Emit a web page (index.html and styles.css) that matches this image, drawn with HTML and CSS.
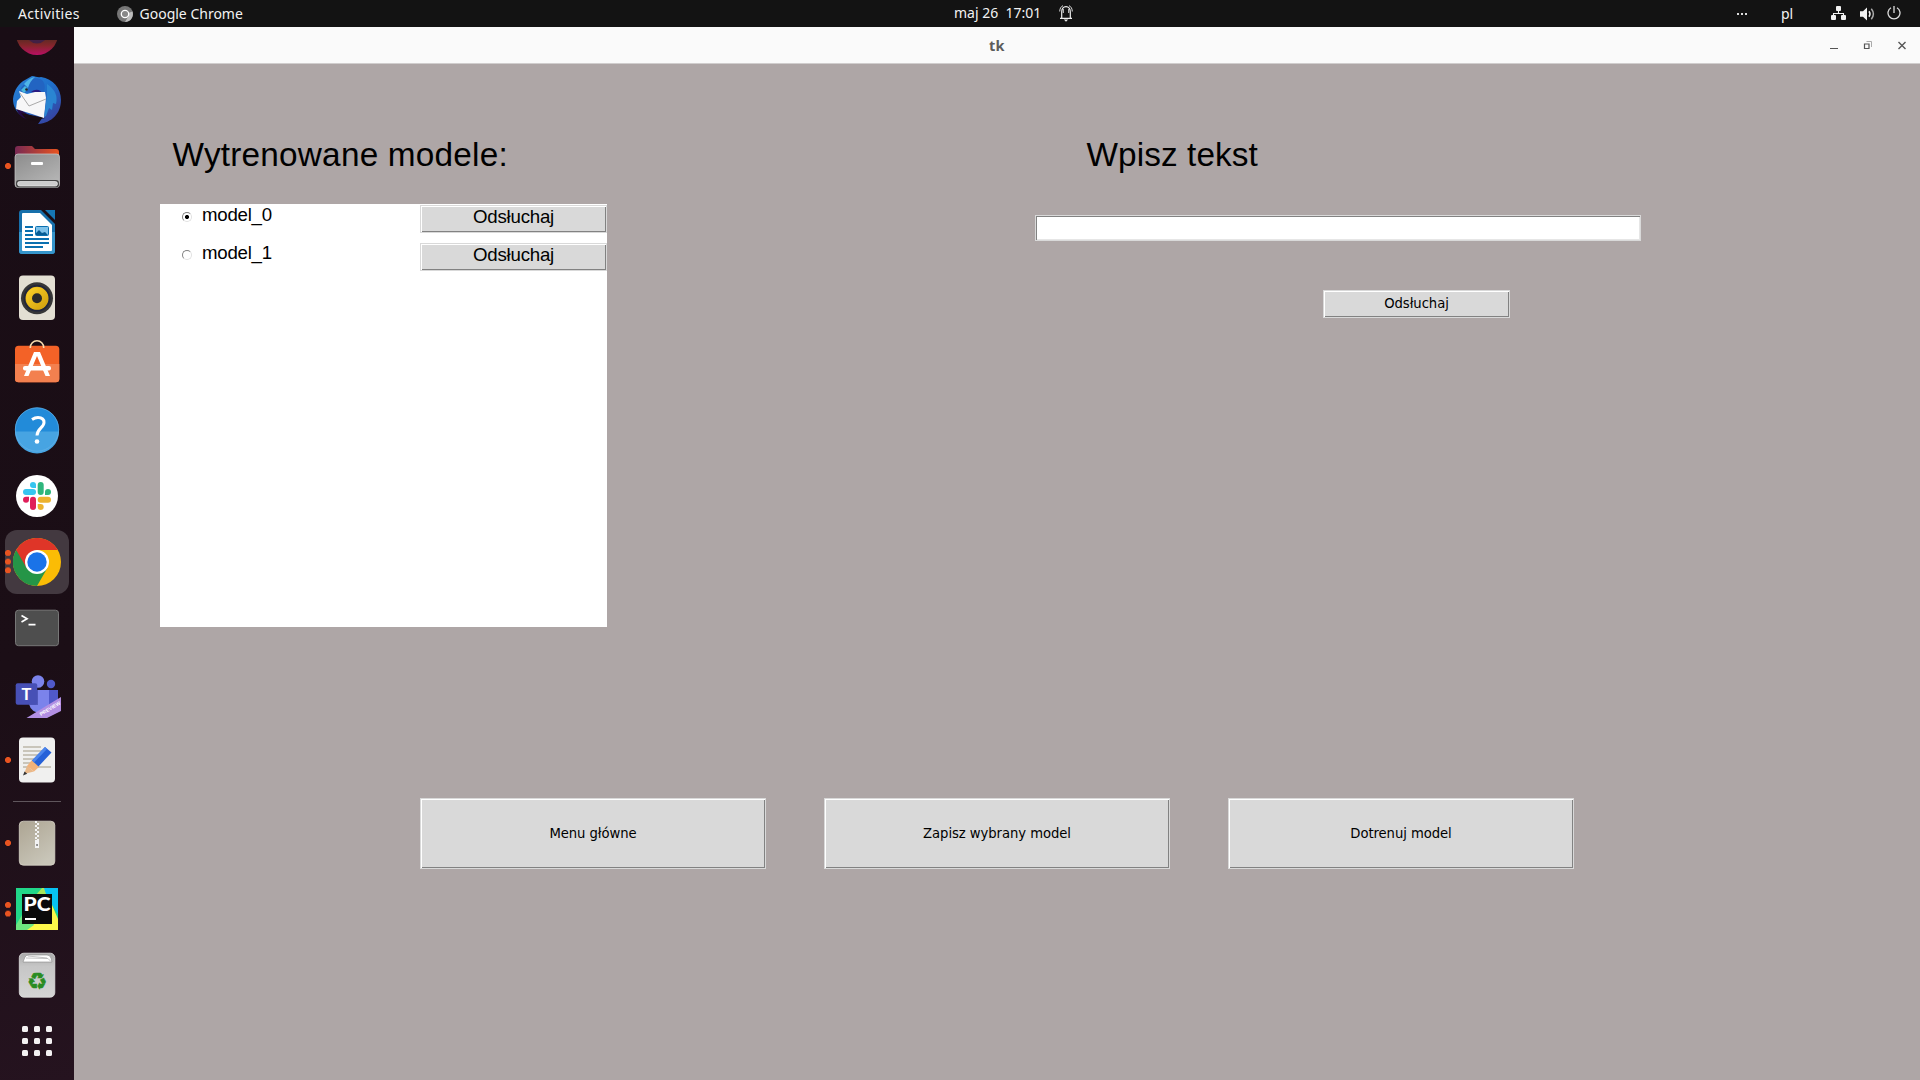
FILE: index.html
```html
<!DOCTYPE html>
<html lang="pl">
<head>
<meta charset="utf-8">
<title>tk</title>
<link rel="stylesheet" href="styles.css">
</head>
<body>
<header class="topbar">
  <span class="activities">Activities</span>
  <svg class="app-icon" width="16" height="16" viewBox="0 0 16 16"><circle cx="8" cy="8" r="8" fill="#777"/><path d="M8 8l7.5-2.5A8 8 0 0 1 8 16l3.5-6z" fill="#bdbdbd"/><circle cx="8" cy="8" r="3.7" fill="#888" stroke="#fff" stroke-width="1.3"/></svg>
  <span class="app-name">Google Chrome</span>
  <span class="clock">maj 26&nbsp; 17:01</span>
  <svg class="bell" width="14" height="17" viewBox="0 0 14 17" fill="none" stroke="#eee" stroke-width="1.2"><path d="M1 13.4h12M2.7 13V7c0-3.5 1.7-5.3 4.3-5.3S11.300 3.500 11.300 7v6"/><path d="M4.300 4v4M9.700 4v4M.7 6.500C.8 3.500 2 1.500 4 .7M13.300 6.500C13.200 3.500 12 1.500 10 .7" stroke-width=".9"/><path d="M4.800 14.500h4.400L7 16.700z" fill="#eee" stroke="none"/></svg>
  <svg class="dots" width="10" height="2" viewBox="0 0 10 2" fill="#ddd"><path d="M0 0h2v2H0zM4 0h2v2H4zM8 0h2v2H8z"/></svg>
  <span class="lang">pl</span>
  <svg class="network" width="16" height="14" viewBox="0 0 16 14" fill="#f2f2f2"><rect x="5" y="0" width="5" height="5" rx="1"/><rect x="0" y="9" width="5" height="5" rx="1"/><rect x="10" y="9" width="5" height="5" rx="1"/><path d="M2.500 10V7.500h10V10M7.500 4v3.500" fill="none" stroke="#f2f2f2" stroke-width="1.100"/></svg>
  <svg class="volume" width="15" height="14" viewBox="0 0 15 14"><path d="M0 4.300h3L7 .5v13L3 9.700H0z" fill="#f2f2f2"/><path d="M9 4.300q2 2.700 0 5.400" fill="none" stroke="#f2f2f2" stroke-width="1.500"/><path d="M11.300 1.800q4.200 5.200 0 10.400" fill="none" stroke="#aaa" stroke-width="1.500"/></svg>
  <svg class="power" width="14" height="14" viewBox="0 0 14 14" fill="none" stroke="#ddd" stroke-width="1.300"><path d="M4 1.700a6 6 0 1 0 6 0M7 0v7"/></svg>
</header>
<div class="desktop">
  <nav class="dock">
    <div class="slot slot-first"><svg width="48" height="48" viewBox="0 0 48 48"><defs><linearGradient id="ff" x2="0" y2="1"><stop offset=".6" stop-color="#5a2a22"/><stop offset=".78" stop-color="#86252c"/><stop offset="1" stop-color="#b80f64"/></linearGradient><clipPath id="fc"><path d="M0 30h48v18H0z"/></clipPath></defs><g clip-path="url(#fc)"><circle cx="24" cy="24" r="21" fill="url(#ff)"/><circle cx="24" cy="23" r="10.500" fill="#422044"/></g></svg></div>
    <div class="slot"><svg width="48" height="48" viewBox="0 0 48 48"><defs><linearGradient id="tb" x2=".8" y2="1"><stop stop-color="#2c83d8"/><stop offset=".5" stop-color="#1f6fca"/><stop offset="1" stop-color="#383f9e"/></linearGradient></defs><path d="M19 0c4 0 5 2 9 1 12 2 20 11 20 23 0 13-9 23-23 24l5-7L12 42C3 37 0 30 0 23 1 14 6 7 12 4z" fill="url(#tb)"/><path d="M12 8c5-6 11-7 17-4 4 4 3 10 1 14L13 16l-3 3c-4-3-3-8 2-11z" fill="#2264c2"/><path d="M11 8Q16 2 22 1q-5 4-7 11z" fill="#4fb5e8"/><path d="M18 16c5-4 10-2 12 2z" fill="#291a82"/><path d="M3 31l13 8 10 3-11 1C9 43 4 37 3 31z" fill="#250b46"/><path d="M8 37l24 5-4 1-3 4-1-2q-9-1-12-3z" fill="#190d15"/><path d="M6 15l8 3 8-2h10l1 6-2 20-12-4-16-5 1-8 4-4z" fill="#f7f7f8"/><path d="M7 17l9 13 17-7" fill="none" stroke="#aaa" stroke-width="1"/><path d="M34 8q12 8 9 20l-3-1-1 7-3-2-3 8-2 1 3-22z" fill="#2a85d2"/><path d="M8 14l4-4 3 3-4 4z" fill="#48b8de"/><circle cx="13.500" cy="13.500" r="1.300" fill="#222"/></svg></div>
    <div class="slot"><i class="run run-1"></i><svg width="48" height="48" viewBox="0 0 48 48"><defs><linearGradient id="fo"><stop stop-color="#772953"/><stop offset="1" stop-color="#e95420"/></linearGradient><linearGradient id="fg" x2=".7" y2="1"><stop stop-color="#8c8c8c"/><stop offset="1" stop-color="#b5b5b5"/></linearGradient></defs><path d="M2 25V7q0-3 3-3h14l3 3h21q3 0 3 3v15z" fill="url(#fo)"/><rect x="2" y="12" width="44.500" height="33.500" rx="3" fill="url(#fg)" stroke="#ccc" stroke-width=".7"/><rect x="3" y="38" width="43" height="7.500" rx="3" fill="#444"/><rect x="4.500" y="39.500" width="40" height="4.500" rx="2.200" fill="#ccc" stroke="#eee" stroke-width=".7"/><rect x="18" y="20" width="12" height="3" rx="1" fill="#fff"/></svg></div>
    <div class="slot"><svg width="48" height="48" viewBox="0 0 48 48"><path d="M6 5q0-3 3-3h19l14 14v27q0 3-3 3H9q-3 0-3-3z" fill="#1770ab"/><path d="M6 24h36v19q0 3-3 3H9q-3 0-3-3z" fill="#3595cb"/><path d="M9 6q0-1 1-1h17l12 12v25q0 1-1 1H10q-1 0-1-1z" fill="#fff"/><path d="M32 2h10v10z" fill="#1677b4"/><path d="M12 19h8M12 23h8M12 27h8M12 31h24M12 35h24M12 39h18" stroke="#0a70b0" stroke-width="2"/><rect x="22.500" y="18.500" width="13" height="9" rx="1" fill="#7fc2ea" stroke="#0a70b0"/><path d="M23 27v-2l3-3 3 3 3-1 3 3z" fill="#075c94"/></svg></div>
    <div class="slot"><svg width="48" height="48" viewBox="0 0 48 48"><defs><linearGradient id="sp" x2="1" y2="1"><stop stop-color="#ffd32a"/><stop offset="1" stop-color="#cd9d0c"/></linearGradient></defs><rect x="6" y="1.500" width="36" height="44.500" rx="4" fill="#e3dfd3"/><circle cx="24" cy="24.300" r="16" fill="#373737"/><circle cx="24" cy="24.300" r="12.500" fill="#dcae13" stroke="#22263a" stroke-width="2"/><circle cx="24" cy="24.300" r="11" fill="url(#sp)"/><circle cx="24" cy="24.300" r="5" fill="#2b2b2b"/></svg></div>
    <div class="slot"><svg width="48" height="48" viewBox="0 0 48 48"><rect x="2" y="5.700" width="44.300" height="36.600" rx="3.500" fill="#f36227"/><path d="M2 24h44.300v15q0 3.300-3.500 3.300H5.500Q2 42.300 2 39z" fill="#f3804f"/><path d="M17.300 8V7.500a6.700 6.700 0 0 1 13.400 0V8" fill="none" stroke="#f8dcae" stroke-width="1.600"/><path d="M21 12h6l10 24h-4.500L24 16l-8.500 20H11z" fill="#fff"/><rect x="10" y="26" width="28" height="4.500" rx="2" fill="#fff"/></svg></div>
    <div class="slot"><svg width="48" height="48" viewBox="0 0 48 48"><g transform="translate(0 -.5)"><circle cx="24" cy="24" r="22" fill="#228bd9"/><path d="M2 26h44a22 22 0 0 1-44 0z" fill="#47a4e2"/><circle cx="24" cy="24" r="21.700" fill="none" stroke="#64b2e6" stroke-width=".7"/><path d="M19 14q3-2 6-2c4 0 6 2 6 5 0 5-7 6-7 13" fill="none" stroke="#fff" stroke-width="3"/><circle cx="24" cy="36" r="2.300" fill="#fff"/></g></svg></div>
    <div class="slot"><svg width="48" height="48" viewBox="0 0 48 48"><circle cx="24" cy="24" r="21" fill="#fff"/><rect x="10" y="17" width="13" height="6" rx="3" fill="#36c5f0"/><path d="M23 16h-3a3 3 0 1 1 3-3z" fill="#36c5f0"/><rect x="24.700" y="10" width="6" height="13" rx="3" fill="#2eb67d"/><path d="M32 23v-3a3 3 0 1 1 3 3z" fill="#2eb67d"/><rect x="24.700" y="24.700" width="13.300" height="6" rx="3" fill="#ecb22e"/><path d="M24.700 32h3a3 3 0 1 1-3 3z" fill="#ecb22e"/><rect x="17" y="24.700" width="6" height="13.300" rx="3" fill="#e01e5a"/><path d="M16 24.700v3a3 3 0 1 1-3-3z" fill="#e01e5a"/></svg></div>
    <div class="slot slot-active"><i class="run run-3"></i><svg width="48" height="48" viewBox="0 0 48 48"><circle cx="24" cy="24" r="24" fill="#fbbc05"/><path d="M24 24L3.200 12A24 24 0 0 0 24 48l10.400-18z" fill="#259547"/><path d="M24 12h20.800A24 24 0 0 0 3.200 12l10.400 18z" fill="#df3528"/><circle cx="24" cy="24" r="12" fill="#fff"/><circle cx="24" cy="24" r="9.700" fill="#1a73e8"/></svg></div>
    <div class="slot"><svg width="48" height="48" viewBox="0 0 48 48"><rect x="2.500" y="6.200" width="43" height="35.500" rx="3" fill="#4e4e4e" stroke="#777"/><path d="M8.500 11.500l5.500 3.200-5.500 3.200M15.500 20.700h7" fill="none" stroke="#fff" stroke-width="1.700"/></svg></div>
    <div class="slot"><svg width="48" height="48" viewBox="0 0 48 48"><circle cx="38" cy="14" r="4.200" fill="#5059c9"/><path d="M35 20h10v14q0 5-5 5h-5z" fill="#5059c9"/><circle cx="25" cy="11.500" r="6.300" fill="#7b83eb"/><path d="M16 20h20v18q0 4-7 5-11 0-13-9z" fill="#7b83eb"/><path d="M16 20h9v15h-9z" fill="#545cbc"/><rect x="2.700" y="13.300" width="21.500" height="21.500" rx="2" fill="#4750b6"/><text x="13.300" y="29.800" text-anchor="middle" font-family="Liberation Sans, sans-serif" font-weight="700" font-size="16" fill="#fff">T</text><path d="M13.500 48L48 27v14l-14 7z" fill="#b28fe3"/><text transform="translate(28 46) rotate(-31)" font-family="Liberation Sans, sans-serif" font-weight="700" font-size="5" fill="#fff">PREVIEW</text></svg></div>
    <div class="slot"><i class="run run-1"></i><svg width="48" height="48" viewBox="0 0 48 48"><rect x="6" y="1.500" width="36" height="45" rx="4" fill="#f0f0ef"/><path d="M10 11h18M10 15h22M10 19h20M10 23h18M10 27h16M10 31h28" stroke="#c9c5ba" stroke-width="1.800"/><path d="M11 38l3-8 7 5.500z" fill="#e9b889"/><path d="M14 30l5-6 7.500 6.500-5.500 5z" fill="#f2b27a"/><path d="M19 24.500L32 11l6.500 5.500-13 14z" fill="#2661d8"/><path d="M19 24.500L32 11l2 2-13 13.500z" fill="#4b85ec"/><path d="M10 39.500l1.500-4 2.700 2.200z" fill="#333"/></svg></div>
    <hr class="separator">
    <div class="slot"><i class="run run-1"></i><svg width="48" height="48" viewBox="0 0 48 48"><defs><linearGradient id="zp" x2=".6" y2="1"><stop stop-color="#ada593"/><stop offset="1" stop-color="#c8c5b8"/></linearGradient></defs><rect x="6.300" y="2.200" width="35.500" height="44" rx="4" fill="url(#zp)" stroke="#d8d4c8" stroke-width=".8"/><path d="M23 2v20" stroke="#f3f3f3" stroke-width="2" stroke-dasharray="2 2"/><path d="M25 4v18" stroke="#f3f3f3" stroke-width="2" stroke-dasharray="2 2"/><rect x="22" y="21" width="4" height="8" fill="#f3f3f3"/><rect x="23.300" y="25" width="1.500" height="2" fill="#777"/></svg></div>
    <div class="slot"><i class="run run-2"></i><svg width="48" height="48" viewBox="0 0 48 48"><path d="M3 3h42v42H3z" fill="#21d789"/><path d="M30 3h15v26L34 12z" fill="#07c3f2"/><path d="M39 20l6 14v11H13l8-6h18z" fill="#fcf84a"/><path d="M22 11l7-8h2l3 9H22z" fill="#a7e75c"/><path d="M3 40l6-10 12 10-7 5H3z" fill="#6de780"/><rect x="9" y="9" width="30" height="30" fill="#0b0b0b"/><rect x="12" y="33" width="11" height="2" fill="#fff"/><text x="10.500" y="26.300" textLength="27" lengthAdjust="spacingAndGlyphs" font-family="Lato, sans-serif" font-weight="900" font-size="19" fill="#fff">PC</text></svg></div>
    <div class="slot"><svg width="48" height="48" viewBox="0 0 48 48"><defs><linearGradient id="tr" x2="0" y2="1"><stop stop-color="#aaa"/><stop offset=".3" stop-color="#c6c6c6"/><stop offset="1" stop-color="#d5d5d5"/></linearGradient></defs><rect x="6.300" y="2.200" width="35.500" height="44" rx="4.500" fill="url(#tr)" stroke="#e0e0e0" stroke-width=".8"/><path d="M10 11l2-5q1-2 4-2h18q3 0 4 3l1 4z" fill="#fff" stroke="#888" stroke-width=".6"/><path d="M13 7l22 .500 3 3M15 5l19 2" fill="none" stroke="#aaa" stroke-width=".7"/><text x="24" y="38" text-anchor="middle" font-family="DejaVu Sans, sans-serif" font-size="23" fill="#298c22" stroke="#298c22" stroke-width=".5">♻</text></svg></div>
    <div class="slot"><svg width="48" height="48" viewBox="0 0 48 48"><g fill="#f3f1f2"><rect x="9" y="9" width="6" height="6" rx="1.500"/><rect x="21" y="9" width="6" height="6" rx="1.500"/><rect x="33" y="9" width="6" height="6" rx="1.500"/><rect x="9" y="21" width="6" height="6" rx="1.500"/><rect x="21" y="21" width="6" height="6" rx="1.500"/><rect x="33" y="21" width="6" height="6" rx="1.500"/><rect x="9" y="33" width="6" height="6" rx="1.500"/><rect x="21" y="33" width="6" height="6" rx="1.500"/><rect x="33" y="33" width="6" height="6" rx="1.500"/></g></svg></div>
  </nav>
  <div class="window">
    <div class="titlebar">
      <span class="title">tk</span>
      <svg class="controls" width="76" height="9" viewBox="0 0 76 9" fill="none" stroke="#555"><path d="M0 7.500h8"/><path d="M34.500 3h4.500v4.500h-4.500z" stroke-width="1.200"/><path d="M36.500 .5h5V6" stroke="#aaa"/><path d="M68.500 1l7 7M75.500 1l-7 7" stroke-width="1.400"/></svg>
    </div>
    <main class="content">
      <div class="upper">
        <section class="models">
          <h1 class="heading models-heading">Wytrenowane modele:</h1>
          <div class="list">
            <div class="row"><label class="choice"><span class="radio radio-on"></span>model_0</label><button class="tk-button listen">Odsłuchaj</button></div>
            <div class="row"><label class="choice"><span class="radio"></span>model_1</label><button class="tk-button listen">Odsłuchaj</button></div>
          </div>
        </section>
        <section class="speech">
          <h1 class="heading speech-heading">Wpisz tekst</h1>
          <input class="entry" type="text">
          <button class="tk-button speak">Odsłuchaj</button>
        </section>
      </div>
      <div class="actions">
        <button class="tk-button">Menu główne</button>
        <button class="tk-button">Zapisz wybrany model</button>
        <button class="tk-button">Dotrenuj model</button>
      </div>
    </main>
  </div>
</div>
</body>
</html>
```
FILE: styles.css
```css
* { box-sizing: border-box; }
body {
  margin: 0;
  width: 1920px;
  height: 1080px;
  overflow: hidden;
  background: #aea6a6;
  font-family: "Noto Sans", sans-serif;
}
svg { display: block; flex: none; }

.topbar {
  display: flex;
  align-items: center;
  height: 27px;
  padding-left: 18px;
  background: #131313;
  color: #f2f2f2;
  font-size: 14px;
  line-height: 26px;
  white-space: nowrap;
}
.topbar span { flex: none; height: 27px; }
.topbar .activities, .topbar .app-name, .topbar .lang { line-height: 28px; }
.activities { width: 99px; letter-spacing: 0.35px; }
.app-icon { margin-right: 6.5px; }
.app-name { width: 814.5px; }
.clock { width: 105px; }
.bell { margin-right: 664px; margin-top: -1px; }
.dots { margin-right: 34px; }
.lang { width: 50px; }
.network { margin-right: 13px; margin-top: -1px; }
.volume { margin-right: 12px; }
.power { margin-top: -1px; }

.desktop { display: flex; height: 1053px; }

.dock {
  width: 74px;
  flex: none;
  overflow: hidden;
  background: linear-gradient(165deg, #190d15 0%, #1b0e16 60%, #25131f 100%);
}
.slot {
  position: relative;
  display: flex;
  align-items: center;
  justify-content: center;
  height: 66px;
}
.slot-first { margin-top: -26px; }
.slot-active::before {
  content: "";
  position: absolute;
  inset: 1px 5px;
  border-radius: 12px;
  background: #433940;
}
.slot-active svg { position: relative; }
.run {
  position: absolute;
  left: 5px;
  width: 6px;
  background: radial-gradient(circle at 3px 3px, #e95420 2.7px, transparent 3.3px) 0 0 / 6px 8.7px;
}
.run-1 { top: 30px; height: 6px; }
.run-2 { top: 26px; height: 15px; }
.run-3 { top: 21px; height: 24px; }
.separator {
  width: 48px;
  height: 1px;
  margin: 8px 13px;
  border: 0;
  background: #5f565c;
}

.window { flex: 1; display: flex; flex-direction: column; }
.titlebar {
  display: flex;
  align-items: center;
  height: 37px;
  padding-left: 915px;
  background: #fafafa;
  border-bottom: 1px solid #d0cdcd;
}
.title {
  width: 841px;
  color: #5c5c5c;
  font-size: 14.5px;
  font-weight: 700;
  letter-spacing: 0.3px;
}

.content { flex: 1; padding-top: 71px; background: #aea6a6; }
.upper { display: flex; padding-left: 86px; }
.models { width: 447px; }
.heading {
  margin: 0;
  font: 400 33.33px/40px "Liberation Sans", sans-serif;
  color: #000;
}
.models-heading { padding-left: 12.5px; letter-spacing: 0.22px; }
.list {
  height: 423px;
  margin-top: 29px;
  padding-top: 1px;
  background: #fff;
}
.row {
  display: flex;
  justify-content: space-between;
  height: 38px;
}
.choice {
  display: flex;
  height: 22px;
  padding-left: 22px;
  font: 18.67px/20px "Liberation Sans", sans-serif;
  letter-spacing: -0.25px;
  color: #000;
}
.radio {
  width: 10px;
  height: 10px;
  margin: 7px 10px 0 0;
  border: 1px solid;
  border-color: #828282 #e2e2e2 #e2e2e2 #828282;
  border-radius: 50%;
}
.radio-on { background: radial-gradient(circle, #000 1.8px, transparent 2.3px); }

.tk-button {
  display: block;
  margin: 0;
  padding: 0;
  border: 1px solid #d9d9d9;
  border-radius: 0;
  background: #d9d9d9;
  box-shadow: inset 1px 1px #fff, inset -1px -1px #828282;
  color: #000;
  font: 13.2px "DejaVu Sans", sans-serif;
  letter-spacing: -0.06px;
}
.listen {
  width: 187px;
  height: 28px;
  padding-bottom: 5px;
  font: 18.67px/20px "Liberation Sans", sans-serif;
  letter-spacing: -0.2px;
}

.speech { margin-left: 428px; }
.speech-heading { padding-left: 51.5px; letter-spacing: 0.1px; }
.entry {
  display: block;
  width: 606px;
  height: 26px;
  margin-top: 40px;
  border: 1px solid #d9d9d9;
  background: #fff;
  box-shadow: inset 1px 1px #828282, inset -1px -1px #e6e6e6;
  outline: 0;
}
.speak { width: 187px; height: 28px; margin: 49px 0 0 288px; padding-bottom: 2px; }

.actions { display: flex; gap: 58px; padding: 171px 0 0 346px; }
.actions .tk-button { width: 346px; height: 71px; }
```
